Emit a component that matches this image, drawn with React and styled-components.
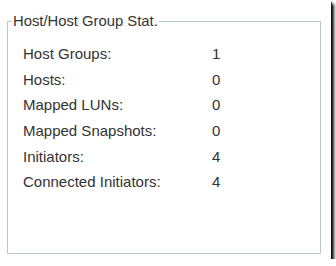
import React from "react";
import styled, { createGlobalStyle } from "styled-components";

const GlobalStyle = createGlobalStyle`
  html, body {
    margin: 0;
    padding: 0;
    background: #ffffff;
  }
  body {
    font-family: "Liberation Sans", Arial, sans-serif;
  }
`;

const stats = [
  { label: "Host Groups:", value: 1 },
  { label: "Hosts:", value: 0 },
  { label: "Mapped LUNs:", value: 0 },
  { label: "Mapped Snapshots:", value: 0 },
  { label: "Initiators:", value: 4 },
  { label: "Connected Initiators:", value: 4 },
];

const App = () => {
  return (
    <>
      <GlobalStyle />
      <Shot>
        <Group>
          <Legend>Host/Host Group Stat.</Legend>
          <StatGrid>
            {stats.map((s) => (
              <React.Fragment key={s.label}>
                <Label>{s.label}</Label>
                <Value>{s.value}</Value>
              </React.Fragment>
            ))}
          </StatGrid>
        </Group>
      </Shot>
    </>
  );
};

export default App;

const Shot = styled.div`
  width: 331px;
  height: 259px;
  box-sizing: border-box;
  padding: 13px 0 0 7px;
  background: #ffffff;
  box-shadow: 3px 4px 3px rgba(0, 0, 0, 0.95), 1px 2px 1px rgba(0, 0, 0, 0.6);
`;

const Group = styled.fieldset`
  box-sizing: border-box;
  width: 314px;
  height: 241px;
  margin: 0;
  padding: 0;
  border: 1px solid #b7c6d5;
  min-width: 0;
`;

const Legend = styled.legend`
  margin-left: 4px;
  padding: 0 1px;
  font-size: 14.8px;
  line-height: 16px;
  color: #333333;
`;

const StatGrid = styled.div`
  display: grid;
  grid-template-columns: 189px auto;
  grid-auto-rows: 25.6px;
  align-items: center;
  padding: 12px 0 0 15px;
  font-size: 15px;
  color: #333333;
`;

const Label = styled.span``;

const Value = styled.span``;
